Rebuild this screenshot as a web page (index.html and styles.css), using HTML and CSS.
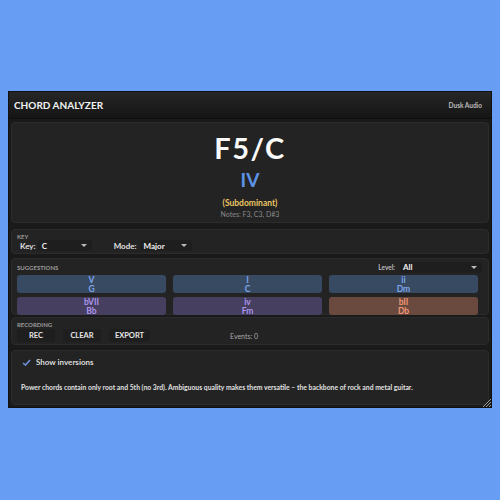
FILE: index.html
```html
<!DOCTYPE html>
<html>
<head>
<meta charset="utf-8">
<link rel="stylesheet" href="styles.css">
</head>
<body>
<div class="window">
  <div class="header">
    <span class="title">CHORD ANALYZER</span>
    <span class="brand">Dusk Audio</span>
  </div>
  <div class="content">
    <div class="panel chord">
      <div class="chord-name">F5/C</div>
      <div class="roman">IV</div>
      <div class="function">(Subdominant)</div>
      <div class="notes">Notes: F3, C3, D#3</div>
    </div>
    <div class="panel key">
      <div class="label">KEY</div>
      <div class="row">
        <span class="field-label">Key:</span>
        <div class="select sel-key"><span>C</span><span class="arrow"></span></div>
        <span class="field-label mode-label">Mode:</span>
        <div class="select sel-mode"><span>Major</span><span class="arrow"></span></div>
      </div>
    </div>
    <div class="panel sugg">
      <div class="sugg-head">
        <span class="label">SUGGESTIONS</span>
        <div class="level">
          <span class="field-label">Level:</span>
          <div class="select sel-level"><span>All</span><span class="arrow"></span></div>
        </div>
      </div>
      <div class="grid">
        <div class="chip blue"><span>V</span><span>G</span></div>
        <div class="chip blue"><span>I</span><span>C</span></div>
        <div class="chip blue"><span>ii</span><span>Dm</span></div>
        <div class="chip purple"><span>bVII</span><span>Bb</span></div>
        <div class="chip purple"><span>iv</span><span>Fm</span></div>
        <div class="chip orange"><span>bII</span><span>Db</span></div>
      </div>
    </div>
    <div class="panel rec">
      <div class="label">RECORDING</div>
      <div class="row rec-row">
        <div class="btn b-rec">REC</div>
        <div class="btn b-clear">CLEAR</div>
        <div class="btn b-export">EXPORT</div>
        <span class="events">Events: 0</span>
      </div>
    </div>
    <div class="panel inv">
      <div class="check-row">
        <svg class="check" width="9" height="7" viewBox="0 0 9 7"><path d="M1 4 L3.5 6 L8 1" fill="none" stroke="#6f8fd8" stroke-width="1.6"/></svg>
        <span>Show inversions</span>
      </div>
      <p class="desc">Power chords contain only root and 5th (no 3rd). Ambiguous quality makes them versatile – the backbone of rock and metal guitar.</p>
    </div>
  </div>
  <svg class="grip" width="9" height="9" viewBox="0 0 9 9"><path d="M9 1 L1 9 M9 4 L4 9 M9 7 L7 9" stroke="#9a9a9a" stroke-width="1"/></svg>
</div>
</body>
</html>
```
FILE: styles.css
```css
* { box-sizing: border-box; }
html, body { margin: 0; padding: 0; }
body {
  background: #679ef3;
  width: 500px;
  height: 500px;
  padding: 91px 8px 0 8px;
  font-family: Lato, "DejaVu Sans", sans-serif;
  color: #ddd;
}
.window {
  position: relative;
  width: 484px;
  height: 317px;
  background: #1a1a1a;
  border: 1px solid #111;
}
.header {
  height: 27px;
  background: linear-gradient(#262626, #151515);
  border-bottom: 1px solid #0e0e0e;
  display: flex;
  justify-content: space-between;
  align-items: center;
  padding: 0 9px 0 5px;
}
.title { font-weight: bold; font-size: 10px; color: #f2f2f2; }
.brand { font-size: 6.5px; color: #bbb; font-weight: bold; }
.content {
  padding: 3px 2px 0 2px;
  display: flex;
  flex-direction: column;
}
.panel {
  background: #232323;
  border: 1px solid #2b2b2b;
  border-radius: 4px;
}
.chord {
  height: 101px;
  display: flex;
  flex-direction: column;
  align-items: center;
  padding-top: 9px;
}
.chord-name { font-weight: bold; font-size: 29px; color: #fafafa; line-height: 32px; letter-spacing: 1.5px; }
.roman { font-weight: bold; font-size: 19px; color: #5d93e6; line-height: 20px; margin-top: 6px; }
.function { font-weight: bold; font-size: 8.5px; color: #ecc663; margin-top: 8px; line-height: 10px; }
.notes { font-size: 7px; color: #8a8a8a; margin-top: 2px; line-height: 9px; }
.label { font-size: 6px; color: #9a9a9a; font-weight: bold; line-height: 7px; }
.key { margin-top: 6px; height: 25px; padding: 4px 5px 0 5px; }
.key .label { line-height: 6px; }
.row { display: flex; align-items: center; }
.field-label { font-size: 8px; color: #e0e0e0; font-weight: bold; }
.select {
  height: 11px;
  background: #1e1e1e;
  border-radius: 3px;
  display: flex;
  justify-content: space-between;
  align-items: center;
  padding: 0 5px 0 4px;
  font-size: 8px;
  color: #f0f0f0;
  font-weight: bold;
}
.arrow {
  width: 0; height: 0;
  border-left: 3px solid transparent;
  border-right: 3px solid transparent;
  border-top: 3px solid #bbb;
}
.key .row { margin-left: 3px; }
.sel-key { width: 54px; margin-left: 2px; }
.mode-label { margin-left: 22px; }
.sel-mode { width: 52px; margin-left: 3px; }
.sugg { margin-top: 4px; height: 57px; padding: 2px 6px 0 5px; }
.sugg-head { display: flex; justify-content: space-between; align-items: center; height: 12px; }
.level { display: flex; align-items: center; }
.level .field-label { font-size: 6.5px; color: #bbb; }
.sel-level { width: 82px; margin-left: 5px; padding-left: 3px; }
.grid {
  display: grid;
  grid-template-columns: 149px 149px 149px;
  column-gap: 7px;
  row-gap: 4px;
  margin-top: 2px;
}
.chip {
  height: 18px;
  border-radius: 3px;
  display: flex;
  flex-direction: column;
  align-items: center;
  justify-content: center;
  font-size: 8.5px;
  font-weight: bold;
  line-height: 9px;
  padding-top: 1px;
}
.blue { background: #384962; color: #7ea6ea; }
.purple { background: #463f5f; color: #ab94ee; }
.orange { background: #6a4a3e; color: #f09676; }
.rec { margin-top: 2px; height: 28px; padding: 3px 5px 0 5px; }
.rec-row { margin-top: 1px; }
.btn {
  height: 13px;
  background: #1e1e1e;
  border-radius: 3px;
  font-size: 7.5px;
  font-weight: bold;
  color: #e6e6e6;
  display: flex;
  align-items: center;
  justify-content: center;
  margin-right: 8px;
}
.b-rec { width: 38px; }
.b-clear { width: 38px; }
.b-export { width: 41px; }
.events { font-size: 7px; color: #aaa; margin-left: 72px; }
.inv { margin-top: 5px; height: 55px; padding: 5px 8px 0 10px; }
.check-row { display: flex; align-items: center; font-size: 8px; color: #ddd; font-weight: bold; height: 12px; }
.check { margin-right: 5px; }
.desc { margin: 15px 0 0 -1px; font-size: 6.8px; color: #e0e0e0; font-weight: bold; white-space: nowrap; line-height: 8px; }
.grip { position: absolute; right: 0; bottom: 0; }
```
